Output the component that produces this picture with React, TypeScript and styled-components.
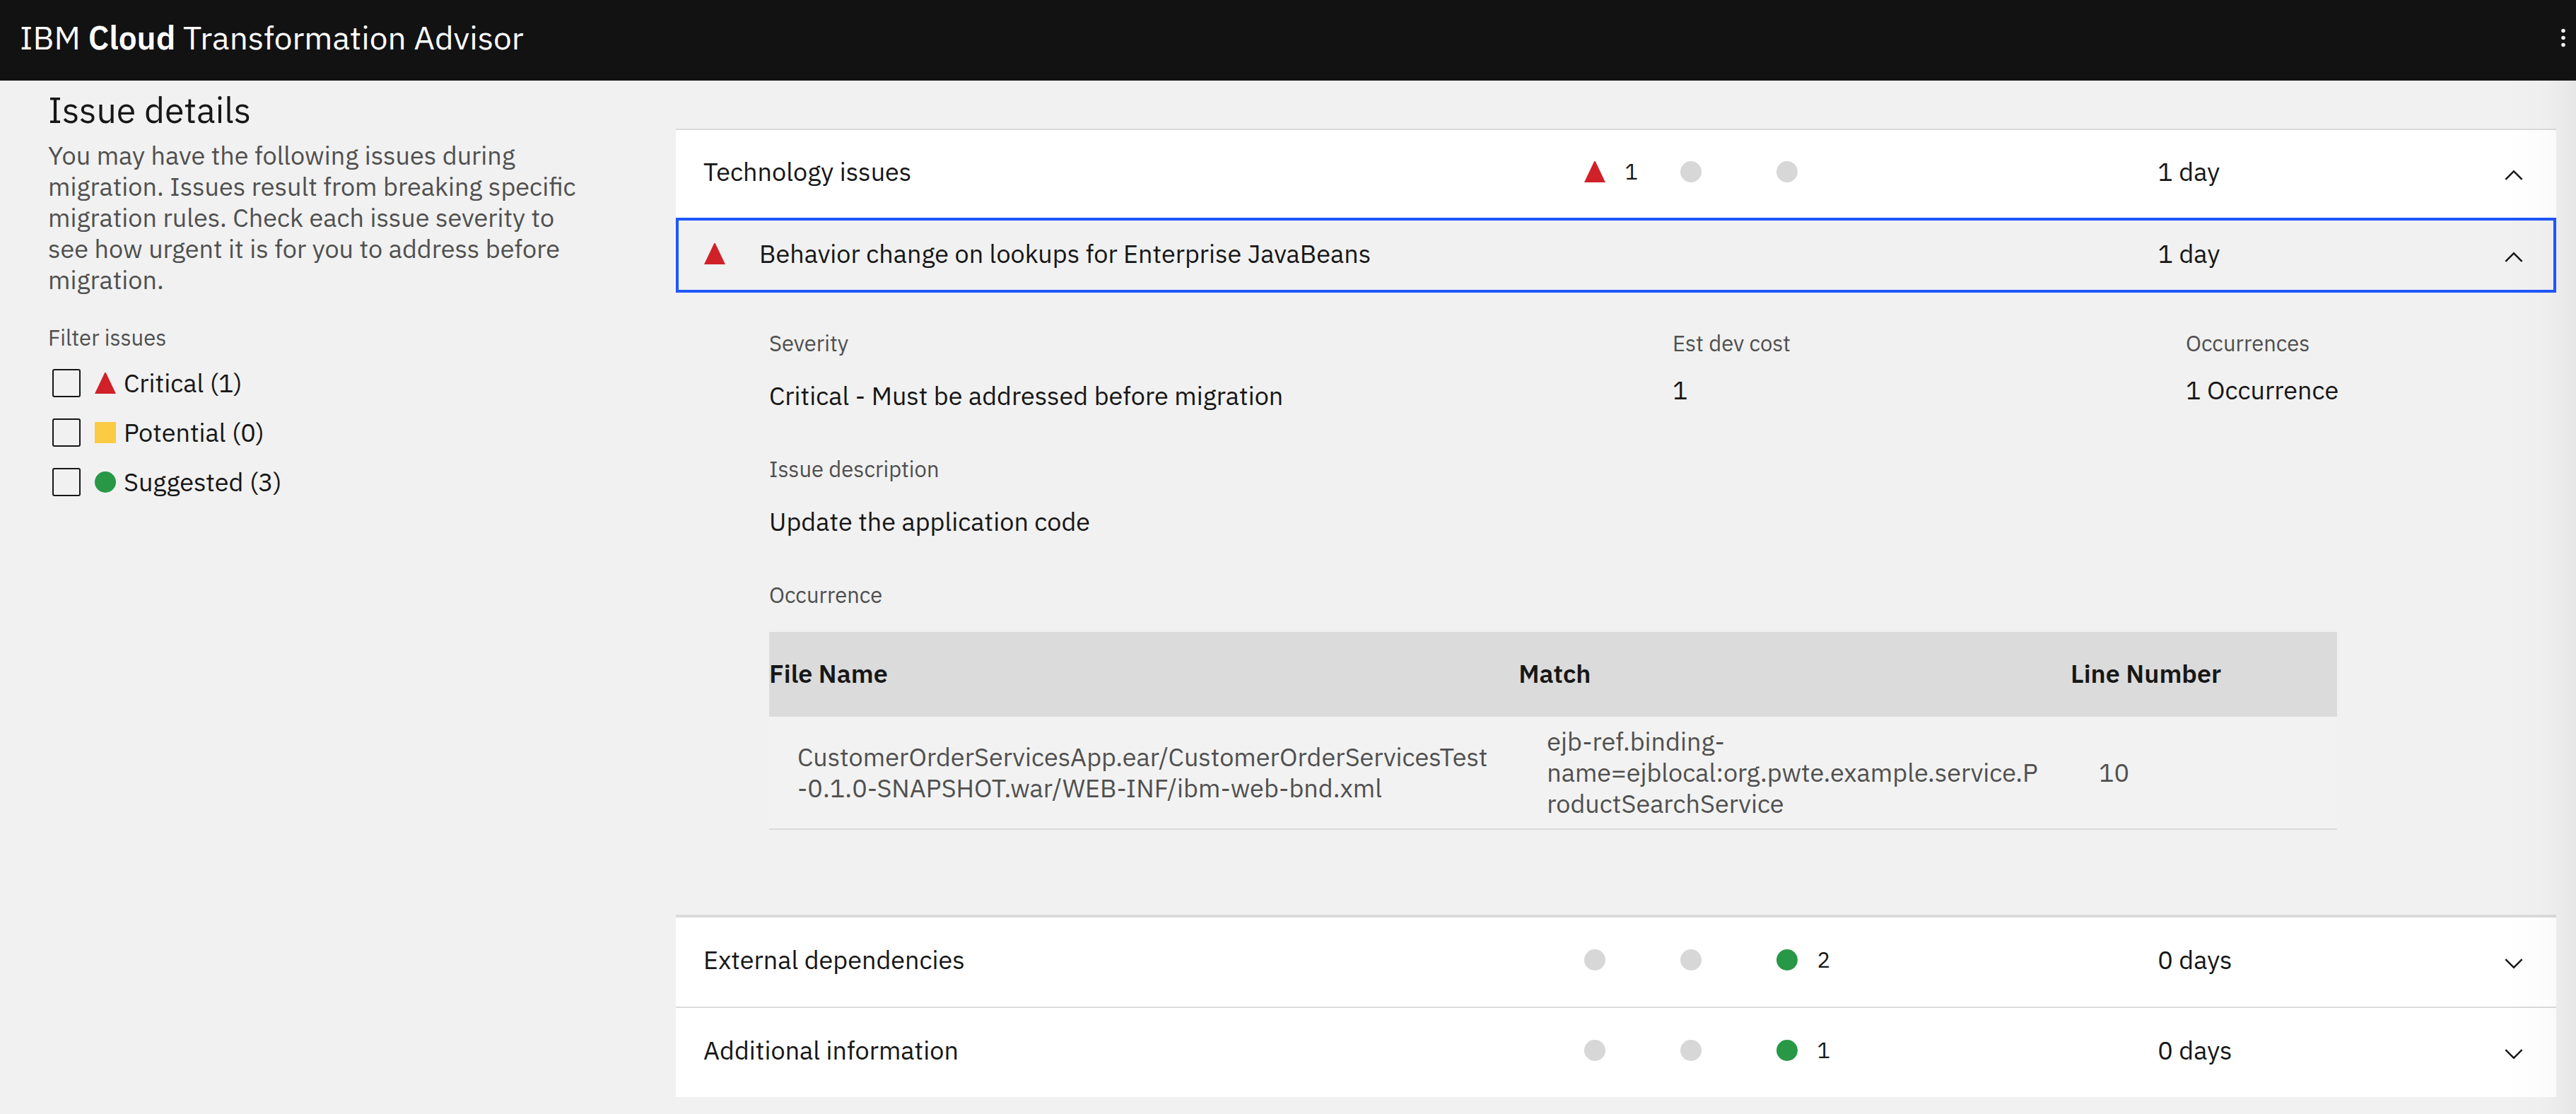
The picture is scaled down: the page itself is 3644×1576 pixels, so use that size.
import React, { useState } from 'react';
import styled, { createGlobalStyle } from 'styled-components';

const color = {
  header: '#121212',
  page: '#f1f1f1',
  text: '#171717',
  muted: '#505050',
  line: '#dbdbdb',
  focus: '#1f57fb',
  critical: '#d02129',
  potential: '#fbcb44',
  suggested: '#289846',
  none: '#d7d7d7',
};

const GlobalStyle = createGlobalStyle`
  *, *::before, *::after { box-sizing: border-box; }
  body {
    margin: 0;
    min-height: 100vh;
    background: ${color.page};
    color: ${color.text};
    font-family: "IBM Plex Sans", "Noto Sans", "Liberation Sans", sans-serif;
    font-size: 36px;
    line-height: 44px;
  }
`;

const Header = styled.header`
  display: flex;
  align-items: center;
  justify-content: space-between;
  height: 114px;
  padding: 0 0 8px 28px;
  background: ${color.header};
  color: #fff;
`;

const Brand = styled.div`
  font-size: 46px;
  line-height: 60px;

  strong { font-weight: 600; }
`;

const MenuButton = styled.button`
  display: flex;
  padding: 0;
  border: 0;
  background: none;
  color: #efefef;
`;

const Layout = styled.div`
  display: grid;
  grid-template-columns: 888px minmax(0, 1fr);
  padding: 0 28px 24px 68px;
`;

const EdgeShade = styled.div`
  position: fixed;
  top: 114px;
  right: 0;
  bottom: 0;
  width: 100px;
  pointer-events: none;
  background: linear-gradient(to right, rgba(0, 0, 0, 0), rgba(0, 0, 0, 0.01) 60%, rgba(0, 0, 0, 0.045));
`;

const Sidebar = styled.aside`
  padding-top: 10px;
`;

const Title = styled.h1`
  margin: 0 0 10px;
  font-size: 50px;
  font-weight: 400;
  line-height: 64px;
`;

const Intro = styled.p`
  max-width: 768px;
  margin: 0 0 40px;
  color: ${color.muted};
`;

const Filters = styled.fieldset`
  margin: 0;
  padding: 0;
  border: 0;
`;

const FilterTitle = styled.legend`
  margin-bottom: 24px;
  padding: 0;
  color: ${color.muted};
  font-size: 31px;
  line-height: 40px;
`;

const FilterList = styled.div`
  display: grid;
  gap: 30px;
  padding-left: 6px;
`;

const FilterRow = styled.div`
  display: flex;
  align-items: center;
  gap: 20px;
`;

const Checkbox = styled.input`
  appearance: none;
  width: 40px;
  height: 40px;
  margin: 0;
  border: 2px solid ${color.text};
  border-radius: 3px;
  background: transparent;

  &:checked { background: ${color.text}; }
`;

const FilterLabel = styled.label`
  display: flex;
  align-items: center;
  gap: 11px;
  line-height: 40px;
`;

const Main = styled.main`
  padding-top: 68px;
`;

const Item = styled.section`
  border-top: 2px solid ${color.line};
`;

const RowButton = styled.button`
  display: grid;
  grid-template-columns: 1246fr 812fr 524fr;
  align-items: center;
  width: 100%;
  border: 0;
  color: inherit;
  font: inherit;
  text-align: left;
`;

const GroupRow = styled(RowButton)<{ $open: boolean }>`
  padding: ${p => (p.$open ? '37px 40px 43px 39px' : '38px 40px 44px 39px')};
  background: #fff;
`;

const IssueRow = styled(RowButton)`
  padding: 25px 36px 29px;
  border: 4px solid ${color.focus};
  background: ${color.page};
`;

const IssueName = styled.span`
  display: flex;
  align-items: center;
  gap: 48px;
`;

const Counts = styled.span`
  display: grid;
  grid-template-columns: repeat(3, 136px);
`;

const Count = styled.span`
  display: flex;
  align-items: center;
  gap: 28px;
  font-size: 31px;
`;

const Effort = styled.span`
  display: flex;
  align-items: center;
  justify-content: space-between;
`;

const ChevronIcon = styled.svg`
  display: block;
  height: 40px;
  margin: 5px 0 -5px;
  fill: ${color.text};
`;

const Details = styled.div`
  padding: 52px 310px 120px 132px;
  border-bottom: 2px solid ${color.line};
`;

const Facts = styled.dl`
  display: grid;
  grid-template-columns: minmax(0, 1278fr) minmax(0, 726fr) minmax(0, 214fr);
  margin: 0 0 62px;
`;

const Term = styled.dt`
  color: ${color.muted};
  font-size: 31px;
  line-height: 40px;
`;

const Value = styled.dd<{ $tight?: boolean }>`
  margin: ${p => (p.$tight ? '24px' : '32px')} 0 0;
  white-space: nowrap;
`;

const Occurrences = styled.table`
  width: 100%;
  border-spacing: 0;
  table-layout: fixed;

  caption {
    margin-bottom: 32px;
    color: ${color.muted};
    font-size: 31px;
    line-height: 40px;
    text-align: left;
  }
`;

const HeadCell = styled.th<{ $width: string }>`
  width: ${p => p.$width};
  height: 120px;
  padding: 0 0 2px;
  background: ${color.line};
  font-weight: 600;
  text-align: left;
`;

const Cell = styled.td`
  height: 160px;
  padding: 0 38px 0 40px;
  border-bottom: 2px solid ${color.line};
  background: #f2f2f2;
  color: ${color.muted};
  word-break: break-word;
`;

type Level = 'critical' | 'potential' | 'suggested' | 'none';

function Marker({ level }: { level: Level }) {
  return (
    <svg width="30" height="30" viewBox="0 0 30 30" fill={color[level]} aria-hidden="true">
      {level === 'critical' && <path d="M14.3 0h1.4L30 30H0z" />}
      {level === 'potential' && <path d="M0 0h30v30H0z" />}
      {(level === 'suggested' || level === 'none') && <circle cx="15" cy="15" r="15" />}
    </svg>
  );
}

function Chevron({ open }: { open: boolean }) {
  return (
    <ChevronIcon width="40" height="40" viewBox="0 0 16 16" aria-hidden="true">
      <path
        d={open
          ? 'M8 5l5 5-.7.7L8 6.4l-4.3 4.3L3 10z'
          : 'M8 11L3 6l.7-.7L8 9.6l4.3-4.3.7.7z'}
      />
    </ChevronIcon>
  );
}

interface GroupProps {
  name: string;
  counts: [number, number, number];
  effort: string;
  initiallyOpen?: boolean;
  children?: React.ReactNode;
}

const levels: Level[] = ['critical', 'potential', 'suggested'];

function Group({ name, counts, effort, initiallyOpen = false, children }: GroupProps) {
  const [open, setOpen] = useState(initiallyOpen);
  return (
    <Item>
      <GroupRow type="button" $open={open} aria-expanded={open} onClick={() => setOpen(!open)}>
        <span>{name}</span>
        <Counts>
          {counts.map((n, i) => (
            <Count key={levels[i]}>
              <Marker level={n > 0 ? levels[i] : 'none'} />
              {n > 0 && <span>{n}</span>}
            </Count>
          ))}
        </Counts>
        <Effort>
          {effort}
          <Chevron open={open} />
        </Effort>
      </GroupRow>
      {open && children}
    </Item>
  );
}

const filters: { level: Level; label: string }[] = [
  { level: 'critical', label: 'Critical (1)' },
  { level: 'potential', label: 'Potential (0)' },
  { level: 'suggested', label: 'Suggested (3)' },
];

export default function App() {
  return (
    <>
      <GlobalStyle />
      <Header>
        <Brand>IBM <strong>Cloud</strong> Transformation Advisor</Brand>
        <MenuButton type="button" aria-label="Open menu">
          <svg width="36" height="36" viewBox="0 0 36 36" fill="currentColor" aria-hidden="true">
            <circle cx="18" cy="8.5" r="2.8" />
            <circle cx="18" cy="18.5" r="2.8" />
            <circle cx="18" cy="28.5" r="2.8" />
          </svg>
        </MenuButton>
      </Header>
      <Layout>
        <Sidebar>
          <Title>Issue details</Title>
          <Intro>
            You may have the following issues during migration. Issues result from breaking
            specific migration rules. Check each issue severity to see how urgent it is for you
            to address before migration.
          </Intro>
          <Filters>
            <FilterTitle>Filter issues</FilterTitle>
            <FilterList>
              {filters.map(f => (
                <FilterRow key={f.level}>
                  <Checkbox type="checkbox" id={`filter-${f.level}`} />
                  <FilterLabel htmlFor={`filter-${f.level}`}>
                    <Marker level={f.level} />
                    {f.label}
                  </FilterLabel>
                </FilterRow>
              ))}
            </FilterList>
          </Filters>
        </Sidebar>
        <Main>
          <Group name="Technology issues" counts={[1, 0, 0]} effort="1 day" initiallyOpen>
            <IssueRow type="button" aria-expanded>
              <IssueName>
                <Marker level="critical" />
                Behavior change on lookups for Enterprise JavaBeans
              </IssueName>
              <span />
              <Effort>
                1 day
                <Chevron open />
              </Effort>
            </IssueRow>
            <Details>
              <Facts>
                <div>
                  <Term>Severity</Term>
                  <Value>Critical - Must be addressed before migration</Value>
                </div>
                <div>
                  <Term>Est dev cost</Term>
                  <Value $tight>1</Value>
                </div>
                <div>
                  <Term>Occurrences</Term>
                  <Value $tight>1 Occurrence</Value>
                </div>
              </Facts>
              <Facts>
                <div>
                  <Term>Issue description</Term>
                  <Value>Update the application code</Value>
                </div>
              </Facts>
              <Occurrences>
                <caption>Occurrence</caption>
                <thead>
                  <tr>
                    <HeadCell scope="col" $width="47.8%">File Name</HeadCell>
                    <HeadCell scope="col" $width="35.2%">Match</HeadCell>
                    <HeadCell scope="col" $width="17%">Line Number</HeadCell>
                  </tr>
                </thead>
                <tbody>
                  <tr>
                    <Cell>CustomerOrderServicesApp.ear/CustomerOrderServicesTest-0.1.0-SNAPSHOT.war/WEB-INF/ibm-web-bnd.xml</Cell>
                    <Cell>ejb-ref.binding-name=ejblocal:org.pwte.example.service.ProductSearchService</Cell>
                    <Cell>10</Cell>
                  </tr>
                </tbody>
              </Occurrences>
            </Details>
          </Group>
          <Group name="External dependencies" counts={[0, 0, 2]} effort="0 days" />
          <Group name="Additional information" counts={[0, 0, 1]} effort="0 days" />
        </Main>
      </Layout>
      <EdgeShade />
    </>
  );
}
